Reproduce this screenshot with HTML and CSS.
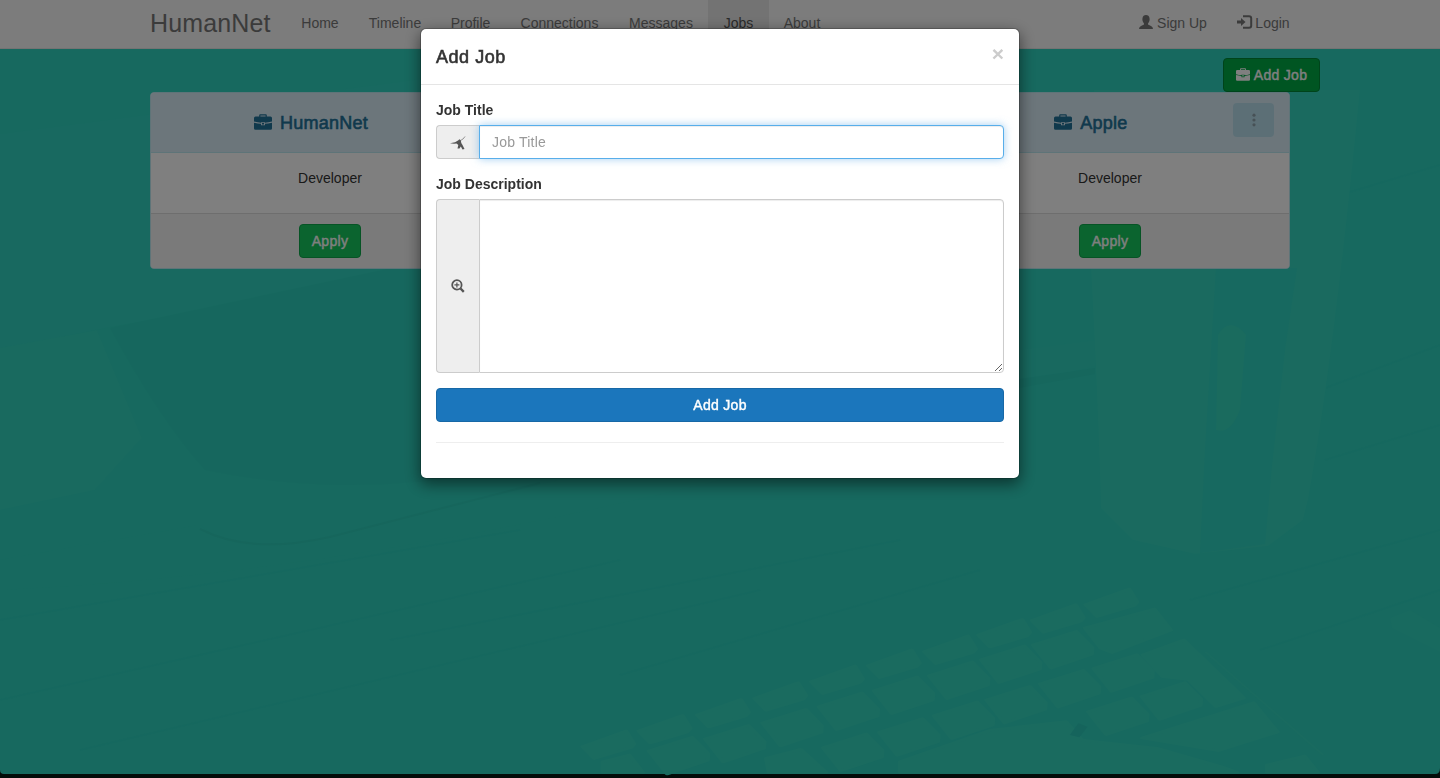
FILE: index.html
```html
<!DOCTYPE html>
<html lang="en">
<head>
<meta charset="utf-8">
<title>HumanNet - Jobs</title>
<link rel="stylesheet" href="styles.css">
</head>
<body>
<svg width="0" height="0" class="defs">
  <symbol id="briefcase" viewBox="0 0 18 16">
    <path fill-rule="evenodd" d="M5.200 2.600V1.200Q5.200 .3 6.200 .3H11.800Q12.800 .3 12.800 1.200V2.600H16.500Q18 2.600 18 4.100V7.600Q14 8.600 11 8.700V8.200H7V8.700Q4 8.600 0 7.600V4.100Q0 2.600 1.500 2.600ZM6.400 2.600H11.600V1.500H6.400ZM0 8.700Q4 9.600 7 9.700V11.300H11V9.700Q14 9.600 18 8.700V14.500Q18 15.800 16.500 15.800H1.500Q0 15.800 0 14.500ZM8 8.900H10V10.500H8Z"/>
  </symbol>
  <symbol id="dots" viewBox="0 0 4 14"><circle cx="2" cy="2.200" r="1.600"/><circle cx="2" cy="7" r="1.600"/><circle cx="2" cy="11.800" r="1.600"/></symbol>
</svg>
<svg class="backdrop" viewBox="0 0 1440 778" preserveAspectRatio="none">
  <rect width="1440" height="778" fill="#091812"/>
  <path d="M0 0H1440V768Q1440 774 1435 774H4Q0 774 0 770Z" fill="#2ed2be"/>
  <path d="M0 134L430 78H720V250L430 270L105 328L0 350Z" fill="#30d3c0"/>
  <path d="M110 328L500 245V470Q350 500 205 470Q160 420 110 328Z" fill="#2dcfbc"/>
  <path d="M0 348L97 330L142 438L95 490L0 510Z" fill="#32d4be"/>
  <path d="M200 525Q240 560 330 537L720 440V480Q330 575 0 590V560Z" fill="#2fd3be"/>
  <path d="M200 529Q250 555 330 537L540 483" fill="none" stroke="#2cccb9" stroke-width="2"/>
  <g stroke="#2bd0bd" stroke-width="1.500" fill="none" opacity=".7">
    <path d="M0 700L620 560M80 750L760 590M390 640L900 540M0 620L520 530M620 675L980 570M1190 600L1440 530M1260 650L1440 590M1320 390L1440 345M1325 460L1440 425M1290 210L1440 165"/>
  </g>
  <path d="M1019 350L1095 340V366L1019 385Z" fill="#30d3bf"/>
  <path d="M1019 379L1095 368V374L1019 388Z" fill="#2ccebb"/>
  <path d="M1090 250L1094 90H1360Q1335 350 1308 500L1303 520L1268 546L1195 554L1133 540L1101 508Q1098 400 1090 250Z" fill="#34d5bf"/>
  <path d="M1216 268H1297L1285 350L1272 465L1265 544L1200 553L1205 450Z" fill="#2fd2c0"/>
  <path d="M1218 335Q1230 315 1246 335L1240 410Q1230 435 1216 430Z" fill="#35d6bd"/>
  <path d="M1440 628L1410 610L1390 618L1392 628L1440 652Z" fill="#31d4be"/>
  <!-- keyboard -->
  <g transform="translate(600 540) scale(.5357 .3333)" fill="#35d6bf" stroke="#35d6bf" stroke-width="8" stroke-linejoin="round">
    <defs>
      <path id="ks" d="M-47 5L35-42L50-3L44 8L-25 41Z"/>
      <path id="kb" d="M-54-15L27-56L57-7L56 13L-20 54Z"/>
    </defs>
    <use href="#ks" x="14" y="615"/><use href="#ks" x="119" y="568"/><use href="#ks" x="228" y="520"/><use href="#ks" x="335" y="470"/><use href="#ks" x="441" y="420"/><use href="#ks" x="547" y="372"/><use href="#ks" x="652" y="330"/><use href="#ks" x="753" y="280"/><use href="#ks" x="853" y="236"/><use href="#ks" x="953" y="189"/>
    <use href="#kb" x="145" y="648"/><use href="#kb" x="250" y="612"/><use href="#kb" x="357" y="564"/><use href="#kb" x="462" y="515"/><use href="#kb" x="565" y="467"/><use href="#kb" x="668" y="422"/><use href="#kb" x="765" y="374"/><use href="#kb" x="862" y="330"/>
    <path d="M905 264L1035 207L1066 270L956 338L935 325Z"/>
    <use href="#kb" x="470" y="638"/><use href="#kb" x="575" y="592"/><use href="#kb" x="677" y="542"/><use href="#kb" x="775" y="495"/><use href="#kb" x="875" y="447"/><use href="#kb" x="975" y="400"/>
    <path d="M1013 345L1090 300L1202 474L1150 500L1098 418L1050 410Z"/>
    <use href="#kb" x="965" y="530"/><use href="#kb" x="1065" y="484"/>
    <path d="M1012 594L1220 488L1265 576L1155 632ZM310 655L375 628L422 697H315ZM5 665L55 645L80 697H5ZM1245 675L1315 648L1340 697H1245ZM560 665L730 570L870 545L900 600L1040 625L1160 680L1190 697H560Z"/>
    <path d="M877 585L893 550L910 560L895 592Z" fill="#2ac8b8" stroke="none"/>
    <path d="M1130 335L1350 645" stroke="#32d4be" stroke-width="5"/>
  </g>
</svg>
<header class="nav">
  <div class="nav-in">
    <a class="brand">HumanNet</a>
    <a class="item home">Home</a><a class="item timeline">Timeline</a><a class="item profile">Profile</a><a class="item connections">Connections</a><a class="item messages">Messages</a><a class="item jobs">Jobs</a><a class="item about">About</a>
    <span class="grow"></span>
    <a class="item signup"><svg width="14" height="14" viewBox="0 0 14 14"><path d="M7 0Q10 0 10.500 3Q11 5 10 7L9 8.500V9.500L12 11Q14 11.800 14 14H0Q0 11.800 2 11L5 9.500V8.500L4 7Q3 5 3.500 3Q4 0 7 0Z"/></svg>Sign Up</a>
    <a class="item login"><svg width="16" height="14" viewBox="0 0 16 14"><path d="M0 5.500H4V3L8.500 7L4 11V8.500H0Z"/><path d="M6 1.200H12Q14.200 1.200 14.200 3.200V10.800Q14.200 12.800 12 12.800H6" fill="none" stroke="currentColor" stroke-width="2"/></svg>Login</a>
  </div>
</header>
<main>
  <div class="toolbar"><button class="btn add"><svg width="14" height="13" viewBox="0 0 18 16" preserveAspectRatio="none"><use href="#briefcase" width="18" height="16"/></svg>Add Job</button></div>
  <div class="cards">
    <section class="card">
      <h3><svg width="18" height="16"><use href="#briefcase"/></svg>HumanNet</h3>
      <p>Developer</p>
      <footer><button class="btn apply">Apply</button></footer>
    </section>
    <section class="card last">
      <h3><svg width="18" height="16"><use href="#briefcase"/></svg>Apple<button class="more"><svg width="4" height="14"><use href="#dots"/></svg></button></h3>
      <p>Developer</p>
      <footer><button class="btn apply">Apply</button></footer>
    </section>
  </div>
</main>
<div class="overlay">
  <div class="modal">
    <div class="head"><h4>Add Job</h4><span class="close">×</span></div>
    <form class="form">
      <label>Job Title</label>
      <div class="group first">
        <span class="addon"><svg width="16" height="14" viewBox="0 0 16 14"><path d="M0 7.300L5 6.200L8 4.600L9.500 3.300L10.800 4.300L11.300 7L12.500 9L14.500 13L12.500 13.500L10.800 10.500L9.500 12.500H7.500L8.300 9L6.500 7.500L4 7.700Z"/><path d="M10.500 4.500L13 3L15 .5" fill="none" stroke="currentColor" stroke-width=".6"/></svg></span>
        <input class="field focused" type="text" placeholder="Job Title">
      </div>
      <label>Job Description</label>
      <div class="group tall">
        <span class="addon"><svg width="14" height="14" viewBox="0 0 14 14"><g fill="none" stroke="currentColor"><circle cx="5.900" cy="5.900" r="4.700" stroke-width="1.800"/><path d="M9.500 9.500L12.800 12.800" stroke-width="2.400"/><path d="M3.400 5.900H8.400M5.900 3.400V8.400" stroke-width="1.200"/></g></svg></span>
        <textarea class="field"></textarea>
      </div>
      <button class="btn submit" type="button">Add Job</button>
      <hr>
    </form>
  </div>
</div>
</body>
</html>
```

FILE: styles.css
```css
* { box-sizing: border-box; }
body { margin: 0; height: 778px; overflow: hidden; font: 14px/20px "Liberation Sans", Arial, sans-serif; color: #333; }
.defs { position: absolute; }
svg { fill: currentColor; flex: none; }
.backdrop { position: absolute; inset: 0; width: 1440px; height: 778px; z-index: -1; }
.nav { height: 49px; background: #f8f8f8; border-bottom: 1px solid #e7e7e7; color: #777; }
.nav-in { width: 1170px; height: 48px; margin: 0 auto; padding: 0 0 0 15px; display: flex; }
.brand { width: 136px; font-size: 25px; line-height: 46px; letter-spacing: .15px; }
.item { display: flex; justify-content: center; padding-top: 13px; white-space: nowrap; gap: 4px; }
.home { width: 68px; }
.timeline { width: 82px; }
.profile { width: 69px; }
.connections { width: 109px; }
.messages { width: 94px; }
.jobs { width: 61px; background: #e7e7e7; color: #555; }
.about { width: 66px; }
.grow { flex: 1; }
.signup { width: 98px; }
.login { width: 83px; gap: 2px; }
.signup svg, .login svg { margin-top: 2px; }
.toolbar { width: 1200px; height: 43px; margin: 0 auto; padding-top: 9px; display: flex; justify-content: flex-end; }
.btn { height: 34px; padding: 0 12px; border: 1px solid; border-radius: 4px; font: inherit; color: #fff; letter-spacing: .3px; -webkit-text-stroke: .4px currentColor; display: flex; align-items: center; justify-content: center; gap: 4px; }
.add { width: 97px; background: #00aa44; border-color: #008837; white-space: nowrap; padding: 0; }
.add svg { margin-top: -2px; }
.apply { width: 62px; padding: 0; background: #16c85e; border-color: #0ca94b; }
.cards { width: 1140px; margin: 0 auto; display: grid; grid-template-columns: repeat(3, 360px); column-gap: 30px; }
.card { height: 177px; border: 1px solid #bce8f1; border-radius: 4px; background: #fff; overflow: hidden; display: grid; grid-template-rows: 60px 60px 55px; }
.last { grid-column: 3; }
.card h3 { margin: 0; padding-right: 38px; display: flex; align-items: center; justify-content: center; gap: 8px; position: relative; background: #d9edf7; border-bottom: 1px solid #bce8f1; color: #217299; font-size: 18px; font-weight: 400; letter-spacing: .25px; -webkit-text-stroke: .6px currentColor; }
.card h3 svg { margin-top: -2px; }
.card p { margin: 0; padding-top: 15px; text-align: center; color: #333; }
.card footer { background: #f5f5f5; border-top: 1px solid #ddd; display: flex; justify-content: center; padding-top: 10px; }
.more { position: absolute; right: 15px; top: 10px; width: 41px; height: 34px; padding: 0; border: 0; border-radius: 4px; background: #b9dfed; color: #8ea3ad; -webkit-text-stroke: 0; display: flex; align-items: center; justify-content: center; }
.card .more svg { margin-top: -1px; stroke: none; }
.overlay { position: fixed; inset: 0; background: rgba(0,0,0,.5); display: flex; justify-content: center; align-items: flex-start; padding-top: 28px; }
.modal { width: 600px; height: 451px; background: #fff; background-clip: padding-box; border: 1px solid rgba(0,0,0,.2); border-radius: 6px; box-shadow: 0 5px 15px rgba(0,0,0,.5); }
.head { height: 56px; padding: 15px; border-bottom: 1px solid #e5e5e5; display: flex; justify-content: space-between; }
.head h4 { margin: 0; font-size: 18px; line-height: 26px; letter-spacing: .55px; font-weight: 400; -webkit-text-stroke: .6px currentColor; }
.close { font-size: 21px; line-height: 19px; font-weight: 700; color: #ccc; }
.form { padding: 15px; }
.form label { display: block; margin-bottom: 5px; font-weight: 700; }
.group { display: flex; height: 34px; margin-bottom: 15px; }
.tall { height: 174px; }
.addon { width: 43px; background: #eee; border: 1px solid #ccc; border-right: 0; border-radius: 4px 0 0 4px; display: flex; align-items: center; justify-content: center; color: #555; }
.first .addon { padding-top: 2px; }
.field { flex: 1; min-width: 0; margin: 0; padding: 6px 12px; font: inherit; border: 1px solid #ccc; border-radius: 0 4px 4px 0; outline: 0; box-shadow: inset 0 1px 1px rgba(0,0,0,.075); }
.field::placeholder { color: #999; letter-spacing: .2px; }
.focused { border-color: #58aeea; box-shadow: inset 0 1px 1px rgba(0,0,0,.075), 0 0 8px rgba(102,175,233,.6); }
.submit { width: 100%; background: #1b76bc; border-color: #1768a6; }
.form hr { margin: 20px 0; border: 0; border-top: 1px solid #eee; }
```
